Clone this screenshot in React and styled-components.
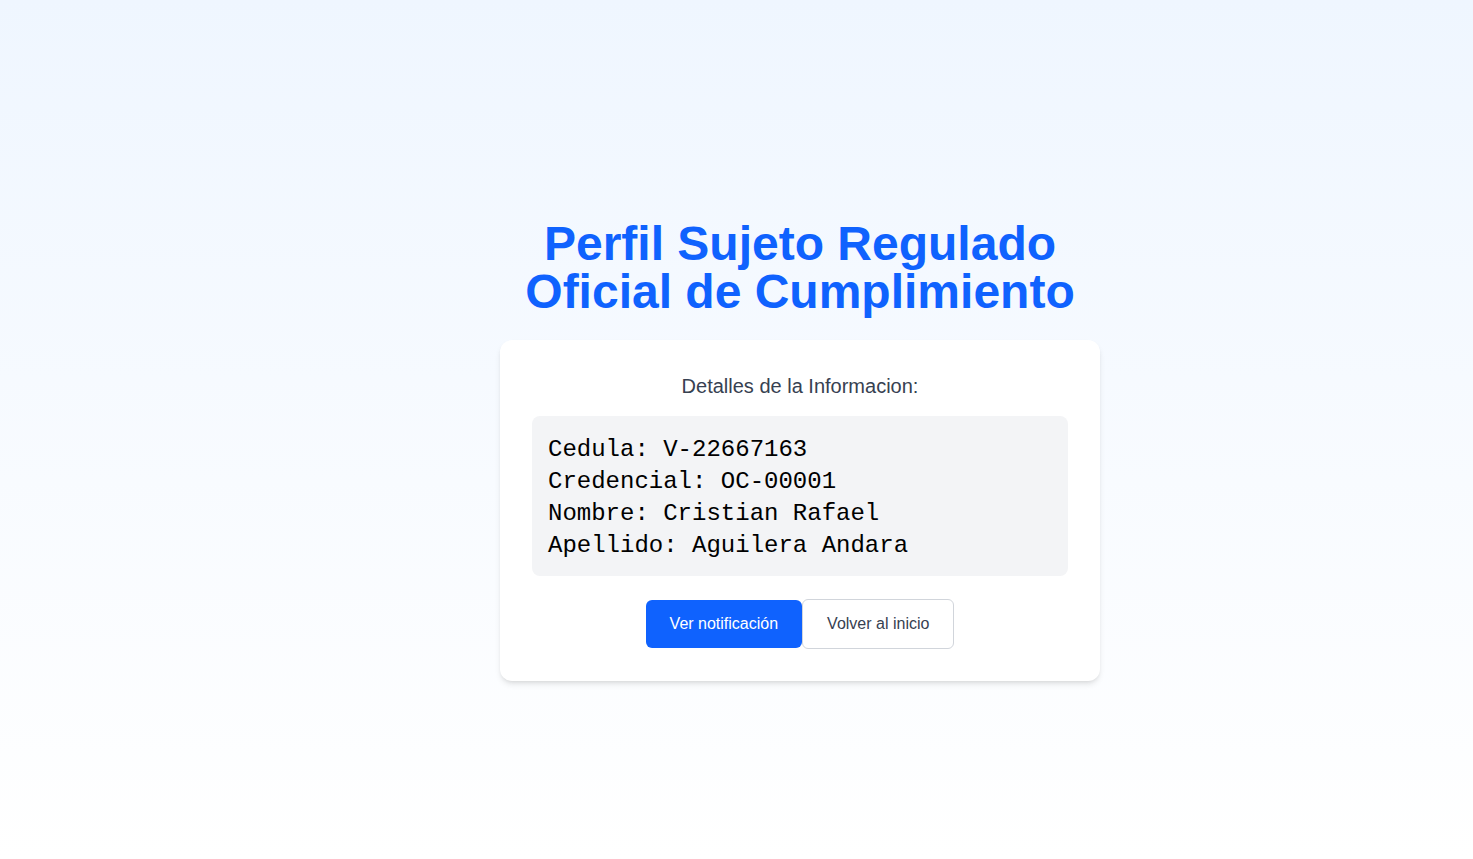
import React from "react";
import styled, { createGlobalStyle } from "styled-components";

const GlobalStyle = createGlobalStyle`
  * {
    box-sizing: border-box;
  }
  body {
    margin: 0;
    font-family: "Liberation Sans", Arial, sans-serif;
  }
`;

const Page = styled.div`
  min-height: 859px;
  background: linear-gradient(to bottom, #eff6ff, #ffffff);
  display: flex;
  flex-direction: column;
  align-items: center;
  justify-content: center;
  padding: 41px 0 0 127px;
`;

const Title = styled.h1`
  margin: 0 0 24px;
  font-size: 48px;
  line-height: 48px;
  font-weight: 700;
  color: #0f62fe;
  text-align: center;
`;

const Card = styled.div`
  width: 600px;
  background: #ffffff;
  border-radius: 12px;
  box-shadow: 0 4px 6px -1px rgba(0, 0, 0, 0.1), 0 2px 4px -2px rgba(0, 0, 0, 0.1);
  padding: 32px;
  display: flex;
  flex-direction: column;
  align-items: center;
`;

const Subtitle = styled.h2`
  margin: 0 0 16px;
  font-size: 20px;
  line-height: 28px;
  font-weight: 400;
  color: #374151;
`;

const Details = styled.pre`
  margin: 0;
  width: 100%;
  background: #f3f4f6;
  border-radius: 8px;
  padding: 18px 16px 14px;
  font-family: "Liberation Mono", monospace;
  font-size: 24px;
  line-height: 32px;
  color: #000000;
`;

const Actions = styled.div`
  display: flex;
  align-items: center;
  margin-top: 23px;
`;

const Button = styled.button`
  font-family: "Liberation Sans", Arial, sans-serif;
  font-size: 16px;
  line-height: 24px;
  padding: 12px 24px;
  border-radius: 6px;
  cursor: pointer;
  border: ${(p) => (p.$primary ? "none" : "1px solid #d1d5db")};
  background: ${(p) => (p.$primary ? "#0f62fe" : "#ffffff")};
  color: ${(p) => (p.$primary ? "#ffffff" : "#374151")};
`;

const info = [
  "Cedula: V-22667163",
  "Credencial: OC-00001",
  "Nombre: Cristian Rafael",
  "Apellido: Aguilera Andara",
];

export default function App() {
  return (
    <>
      <GlobalStyle />
      <Page>
        <Title>
          Perfil Sujeto Regulado
          <br />
          Oficial de Cumplimiento
        </Title>
        <Card>
          <Subtitle>Detalles de la Informacion:</Subtitle>
          <Details>{info.join("\n")}</Details>
          <Actions>
            <Button $primary>Ver notificación</Button>
            <Button>Volver al inicio</Button>
          </Actions>
        </Card>
      </Page>
    </>
  );
}
